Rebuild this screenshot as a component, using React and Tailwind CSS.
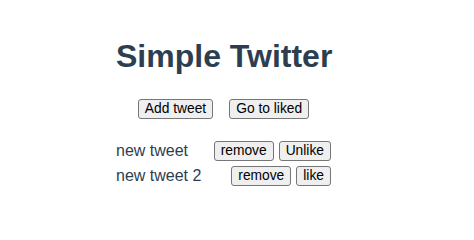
export default function App() {
  const tweets = [
    { text: 'new tweet', liked: true },
    { text: 'new tweet 2', liked: false },
  ];

  const btn =
    'bg-[#efefef] border border-[#767676] rounded-[3px] px-[6px] py-[1px] text-[13.8px] leading-[16px] text-black';

  return (
    <div className="min-h-screen bg-white font-['Liberation_Sans',Arial,sans-serif] text-[#2c3e50]">
      <div className="ml-[116px] w-[215px] pt-[38px]">
        <h1 className="text-center text-[32px] leading-[37px] font-bold whitespace-nowrap">
          Simple Twitter
        </h1>
        <div className="mt-[24px] flex justify-center gap-4">
          <button className={btn}>Add tweet</button>
          <button className={btn}>Go to liked</button>
        </div>
        <ul className="mt-[22px] flex flex-col gap-[5px]">
          {tweets.map((t, i) => (
            <li key={i} className="flex items-center justify-between">
              <span className="text-base leading-[18px]">{t.text}</span>
              <span className="flex gap-[5px]">
                <button className={btn}>remove</button>
                <button className={btn}>{t.liked ? 'Unlike' : 'like'}</button>
              </span>
            </li>
          ))}
        </ul>
      </div>
    </div>
  );
}
